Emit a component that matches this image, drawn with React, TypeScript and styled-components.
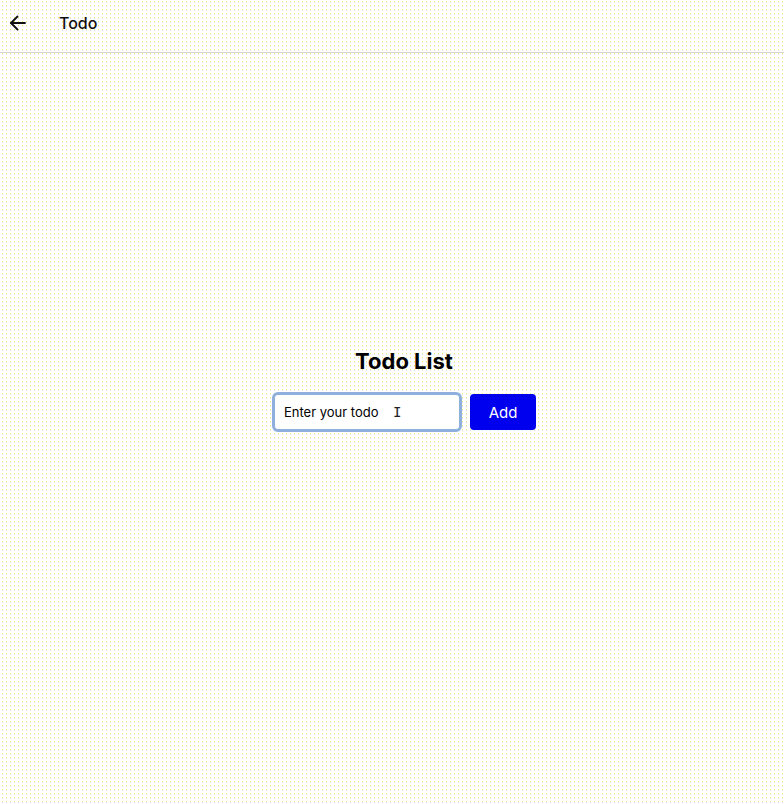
import React from "react";
import styled, { createGlobalStyle } from "styled-components";

const Global = createGlobalStyle`
  html, body { margin: 0; padding: 0; }
  body {
    font-family: Inter, "Noto Sans", "Liberation Sans", sans-serif;
    color: #000;
    background-color: #ffffff;
    background-image:
      linear-gradient(to right, transparent 0 1px, #ffffff 1px),
      linear-gradient(to bottom, #f4ee80 0 1px, #e2e2f6 1px 2px, #ffffff 2px);
    background-size: 4px 4px, 4px 4px;
    background-position: 2px 1px, 2px 1px;
  }
`;

const Page = styled.div`
  min-height: 804px;
  display: flex;
  flex-direction: column;
`;

const Header = styled.header`
  height: 52px;
  border-bottom: 1px solid #d4d4d4;
  display: flex;
  align-items: center;
  padding-left: 9px;
  gap: 32px;
  box-sizing: content-box;
`;

const BackButton = styled.button`
  width: 18px;
  height: 18px;
  padding: 0;
  border: none;
  background: transparent;
  display: flex;
  align-items: center;
  justify-content: center;
  color: #111;
  margin-top: -7px;
`;

const HeaderTitle = styled.h1`
  margin: 0;
  margin-top: -7px;
  font-size: 16px;
  font-weight: 500;
  color: #111;
`;

const Main = styled.main`
  display: flex;
  flex-direction: column;
  align-items: center;
  padding-top: 295px;
  padding-left: 24px;
`;

const Title = styled.h2`
  margin: 0 0 18px;
  font-size: 22px;
  font-weight: 700;
  line-height: 26px;
`;

const Row = styled.form`
  display: flex;
  align-items: center;
  gap: 8px;
`;

const InputWrap = styled.div`
  position: relative;
`;

const Input = styled.input`
  width: 190px;
  height: 40px;
  box-sizing: border-box;
  border: 3px solid #8fb0dc;
  border-radius: 6px;
  padding: 0 9px;
  font-family: inherit;
  font-size: 13px;
  color: #000;
  background: #fff;
  outline: none;
  &::placeholder { color: #000; }
`;

const Cursor = styled.span`
  position: absolute;
  left: 121px;
  top: 12px;
  font-family: "DejaVu Sans Mono", monospace;
  font-size: 14px;
  line-height: 16px;
  color: #222;
  pointer-events: none;
`;

const AddButton = styled.button`
  height: 36px;
  width: 66px;
  border: none;
  border-radius: 4px;
  background: #0000ee;
  color: #fff;
  font-family: inherit;
  font-size: 15px;
`;

export default function App() {
  return (
    <Page>
      <Global />
      <Header>
        <BackButton aria-label="Back">
          <svg width="18" height="18" viewBox="0 0 18 18" fill="none" stroke="currentColor" strokeWidth="1.8" strokeLinecap="round" strokeLinejoin="round">
            <path d="M16 9H2" />
            <path d="M8.5 2.5L2 9l6.5 6.5" />
          </svg>
        </BackButton>
        <HeaderTitle>Todo</HeaderTitle>
      </Header>
      <Main>
        <Title>Todo List</Title>
        <Row onSubmit={(e) => e.preventDefault()}>
          <InputWrap>
            <Input placeholder="Enter your todo" />
            <Cursor>I</Cursor>
          </InputWrap>
          <AddButton type="submit">Add</AddButton>
        </Row>
      </Main>
    </Page>
  );
}
